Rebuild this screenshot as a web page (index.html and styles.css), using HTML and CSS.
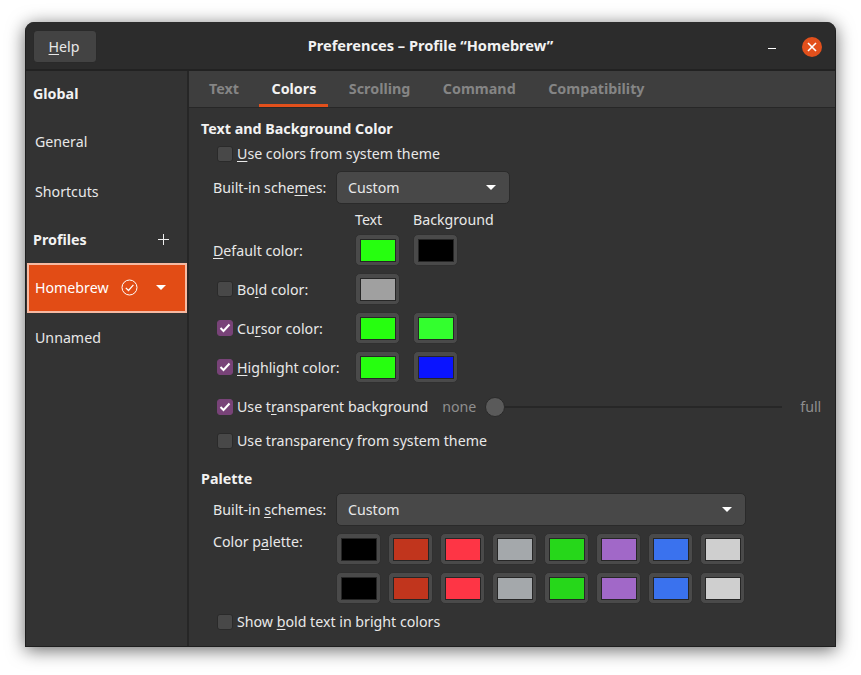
FILE: index.html
```html
<!DOCTYPE html>
<html lang="en">
<head>
  <meta charset="UTF-8">
  <title>Preferences – Profile “Homebrew”</title>
  <link rel="stylesheet" href="styles.css">
</head>
<body>
  <div class="window">
    <header class="titlebar">
      <button class="help-btn"><u>H</u>elp</button>
      <div class="title">Preferences – Profile “Homebrew”</div>
      <div class="minimize"></div>
      <div class="close">
        <svg width="10" height="10" viewBox="0 0 10 10"><path d="M1 1L9 9M9 1L1 9" stroke="#fff" stroke-width="1.6"/></svg>
      </div>
    </header>

    <div class="main">
      <nav class="sidebar">
        <div class="side-head side-global">Global</div>
        <div class="side-item">General</div>
        <div class="side-item">Shortcuts</div>
        <div class="side-head side-profiles">
          Profiles
          <svg class="plus" width="11" height="11" viewBox="0 0 11 11"><path d="M5.5 0V11M0 5.5H11" stroke="#eee" stroke-width="1"/></svg>
        </div>
        <div class="side-item selected">
          <span>Homebrew</span>
          <svg class="default-mark" width="17" height="17" viewBox="0 0 17 17"><circle cx="8.5" cy="8.5" r="7.5" fill="none" stroke="#fff" stroke-width="1"/><path d="M4.8 8.8L7.5 11.5L12.4 5.8" fill="none" stroke="#fff" stroke-width="1.2"/></svg>
          <span class="caret caret-side"></span>
        </div>
        <div class="side-item">Unnamed</div>
      </nav>

      <section class="panel">
        <div class="tabs">
          <div class="tab">Text</div>
          <div class="tab active">Colors</div>
          <div class="tab">Scrolling</div>
          <div class="tab">Command</div>
          <div class="tab">Compatibility</div>
        </div>

        <div class="content">
          <h3 class="heading">Text and Background Color</h3>
          <label class="check-row row-system"><span class="check"></span><span><u>U</u>se colors from system theme</span></label>

          <div class="combo-row row-scheme">
            <span class="combo-label">Built-in sche<u>m</u>es:</span>
            <div class="combo combo-short"><span>Custom</span><span class="caret"></span></div>
          </div>

          <div class="color-grid">
            <span></span><span class="col-head">Text</span><span class="col-head">Background</span>

            <span class="color-label"><u>D</u>efault color:</span>
            <div class="swatch"><i class="c-green"></i></div>
            <div class="swatch"><i class="c-black"></i></div>

            <label class="color-label with-check"><span class="check"></span><span>Bo<u>l</u>d color:</span></label>
            <div class="swatch"><i class="c-grey"></i></div>
            <span></span>

            <label class="color-label with-check"><span class="check on"><svg width="12" height="10" viewBox="0 0 12 10"><path d="M1.5 5L4.5 8L10.5 1.5" fill="none" stroke="#fff" stroke-width="2"/></svg></span><span>Cu<u>r</u>sor color:</span></label>
            <div class="swatch"><i class="c-green"></i></div>
            <div class="swatch"><i class="c-lime"></i></div>

            <label class="color-label with-check"><span class="check on"><svg width="12" height="10" viewBox="0 0 12 10"><path d="M1.5 5L4.5 8L10.5 1.5" fill="none" stroke="#fff" stroke-width="2"/></svg></span><span><u>H</u>ighlight color:</span></label>
            <div class="swatch"><i class="c-green"></i></div>
            <div class="swatch"><i class="c-blue"></i></div>
          </div>

          <div class="check-row row-transparent">
            <span class="check on"><svg width="12" height="10" viewBox="0 0 12 10"><path d="M1.5 5L4.5 8L10.5 1.5" fill="none" stroke="#fff" stroke-width="2"/></svg></span>
            <span>Use t<u>r</u>ansparent background</span>
            <span class="scale-end scale-none">none</span>
            <div class="scale"><span class="knob"></span></div>
            <span class="scale-end scale-full">full</span>
          </div>
          <label class="check-row row-system-alpha"><span class="check"></span><span>Use transparency from system theme</span></label>

          <h3 class="heading heading-palette">Palette</h3>
          <div class="combo-row row-palette-scheme">
            <span class="combo-label">Built-in <u>s</u>chemes:</span>
            <div class="combo combo-long"><span>Custom</span><span class="caret"></span></div>
          </div>

          <div class="palette-row">
            <span class="palette-label">Color p<u>a</u>lette:</span>
            <div class="palette">
              <div class="swatch"><i class="p-black"></i></div>
              <div class="swatch"><i class="p-red"></i></div>
              <div class="swatch"><i class="p-rose"></i></div>
              <div class="swatch"><i class="p-silver"></i></div>
              <div class="swatch"><i class="p-green"></i></div>
              <div class="swatch"><i class="p-purple"></i></div>
              <div class="swatch"><i class="p-azure"></i></div>
              <div class="swatch"><i class="p-light"></i></div>
              <div class="swatch"><i class="p-black"></i></div>
              <div class="swatch"><i class="p-red"></i></div>
              <div class="swatch"><i class="p-rose"></i></div>
              <div class="swatch"><i class="p-silver"></i></div>
              <div class="swatch"><i class="p-green"></i></div>
              <div class="swatch"><i class="p-purple"></i></div>
              <div class="swatch"><i class="p-azure"></i></div>
              <div class="swatch"><i class="p-light"></i></div>
            </div>
          </div>

          <label class="check-row row-bright"><span class="check"></span><span>Show <u>b</u>old text in bright colors</span></label>
        </div>
      </section>
    </div>
  </div>
</body>
</html>
```

FILE: styles.css
```css
* {
  box-sizing: border-box;
}

html {
  height: 100%;
}

body {
  min-height: 100%;
  margin: 0;
  padding: 22px 0 28px 25px;
  background: #fff;
  font-family: "Noto Sans", sans-serif;
  font-size: 14.2px;
  color: #e8e8e8;
}

u {
  text-underline-offset: 2px;
  text-decoration-thickness: 1px;
}

.window {
  width: 811px;
  height: 625px;
  background: #333;
  border: 1px solid #1f1f1f;
  border-top: none;
  border-radius: 9px 9px 0 0;
  box-shadow: 0 3px 18px rgba(0, 0, 0, 0.6);
  overflow: hidden;
}

.titlebar {
  display: flex;
  align-items: center;
  position: relative;
  height: 49px;
  padding: 2px 13px 0 7px;
  background: #2c2c2c;
  border-bottom: 2px solid #222;
}

.help-btn {
  width: 64px;
  height: 33px;
  padding: 0 2px 0 0;
  background: #434343;
  border: 1px solid #2a2a2a;
  border-radius: 4px;
  color: #e8e8e8;
  font: inherit;
}

.title {
  position: absolute;
  left: 0;
  right: 0;
  top: 13px;
  text-align: center;
  font-size: 14.6px;
  font-weight: 700;
  color: #f2f2f2;
  pointer-events: none;
}

.minimize {
  width: 8px;
  height: 1px;
  margin: 3px 0 0 auto;
  background: #fff;
}

.close {
  display: flex;
  align-items: center;
  justify-content: center;
  width: 20px;
  height: 20px;
  margin-left: 26px;
  border-radius: 50%;
  background: #e2501c;
}

.main {
  display: flex;
  height: 576px;
}

.sidebar {
  width: 163px;
  flex: none;
  padding-left: 1px;
  border-right: 2px solid #262626;
}

.side-head {
  display: flex;
  align-items: center;
  padding-left: 6px;
  font-size: 14.3px;
  font-weight: 700;
  color: #f2f2f2;
}

.side-global {
  height: 46px;
  padding-bottom: 2px;
}

.side-profiles {
  height: 46px;
  padding-bottom: 2px;
}

.plus {
  margin-left: auto;
  margin-right: 18px;
}

.side-item {
  display: flex;
  align-items: center;
  height: 50px;
  padding: 0 0 2px 8px;
}

.side-item.selected {
  width: 160px;
  padding-left: 6px;
  background: #e24c15;
  border: 2px solid #f6b9a2;
  color: #fff;
}

.default-mark {
  flex: none;
  margin-left: 12px;
}

.caret {
  flex: none;
  width: 0;
  height: 0;
  border-left: 5px solid transparent;
  border-right: 5px solid transparent;
  border-top: 5px solid #fff;
}

.caret-side {
  margin-left: 18px;
}

.panel {
  flex: 1;
  min-width: 0;
}

.tabs {
  display: flex;
  gap: 8.5px;
  height: 37px;
  padding-left: 8px;
  background: #3e3e3e;
  border-bottom: 1px solid #272727;
}

.tab {
  padding: 8px 12px 0;
  height: 36px;
  font-size: 14.3px;
  font-weight: 700;
  color: #858585;
}

.tab.active {
  color: #f2f2f2;
  border-bottom: 3px solid #e2501c;
}

.content {
  padding: 0 0 0 12px;
}

.heading {
  height: 18px;
  margin: 12px 0 0;
  font-size: 14.3px;
  line-height: 18px;
  font-weight: 700;
  color: #f2f2f2;
}

.heading-palette {
  margin-top: 20px;
}

.check-row {
  display: flex;
  align-items: center;
  gap: 4px;
  height: 18px;
  padding-left: 16px;
  white-space: nowrap;
}

.check + span {
  margin-bottom: 2px;
}

.row-system {
  margin-top: 7px;
}

.row-transparent {
  height: 32px;
  margin-top: 8px;
}

.row-system-alpha {
  margin-top: 9px;
}

.row-bright {
  margin-top: 9px;
}

.check {
  display: flex;
  align-items: center;
  justify-content: center;
  flex: none;
  width: 16px;
  height: 16px;
  background: #484848;
  border: 1px solid #2a2a2a;
  border-radius: 3px;
}

.check.on {
  background: #784378;
  border-color: #784378;
}

.combo-row {
  display: flex;
  align-items: center;
  height: 33px;
  padding-left: 12px;
}

.row-scheme {
  margin-top: 8px;
}

.row-palette-scheme {
  margin-top: 5px;
}

.combo-label {
  width: 123px;
  flex: none;
  white-space: nowrap;
}

.combo {
  display: flex;
  align-items: center;
  justify-content: space-between;
  height: 33px;
  padding: 0 13px 0 11px;
  background: #484848;
  border: 1px solid #2a2a2a;
  border-radius: 5px;
}

.combo-short {
  width: 174px;
}

.combo-long {
  width: 410px;
}

.color-grid {
  display: grid;
  grid-template-columns: 129px 45px 45px;
  grid-template-rows: 16px;
  grid-auto-rows: 32px;
  column-gap: 13px;
  row-gap: 7px;
  margin-top: 7px;
  padding-left: 12px;
}

.col-head {
  white-space: nowrap;
  line-height: 18px;
}

.color-label {
  display: flex;
  align-items: center;
  white-space: nowrap;
}

.with-check {
  gap: 4px;
  padding-left: 4px;
}

.color-label .check + span {
  margin-bottom: 0;
}

.swatch {
  width: 45px;
  height: 32px;
  padding: 4px 3px 3px 4px;
  background: #4a4a4a;
  border: 1px solid #303030;
  border-radius: 5px;
}

.swatch i {
  display: block;
  height: 100%;
  border: 1px solid #262626;
}

.c-green { background: #26ff0f; }
.c-black { background: #000; }
.c-grey { background: #a0a0a0; }
.c-lime { background: #33ff2e; }
.c-blue { background: #0a14ff; }

.p-black { background: #000; }
.p-red { background: #c1351d; }
.p-rose { background: #fe3545; }
.p-silver { background: #a4a8ab; }
.p-green { background: #26d71a; }
.p-purple { background: #a168c8; }
.p-azure { background: #3a72ee; }
.p-light { background: #cfcfcf; }

.scale-end {
  flex: none;
  margin-bottom: 2px;
  color: #8f8f8f;
}

.scale-none {
  margin-left: 10px;
}

.scale {
  display: flex;
  align-items: center;
  flex: none;
  width: 297px;
  height: 2px;
  margin-left: 5px;
  background: #272727;
}

.knob {
  flex: none;
  width: 20px;
  height: 20px;
  border-radius: 50%;
  background: #5a5a5a;
  border: 1px solid #2a2a2a;
}

.scale-full {
  margin-left: 14px;
}

.palette-row {
  display: flex;
  margin-top: 7px;
  padding-left: 12px;
}

.palette-label {
  width: 123px;
  flex: none;
  line-height: 18px;
  white-space: nowrap;
}

.palette {
  display: grid;
  grid-template-columns: repeat(8, 45px);
  grid-auto-rows: 32px;
  gap: 7px;
}
```
